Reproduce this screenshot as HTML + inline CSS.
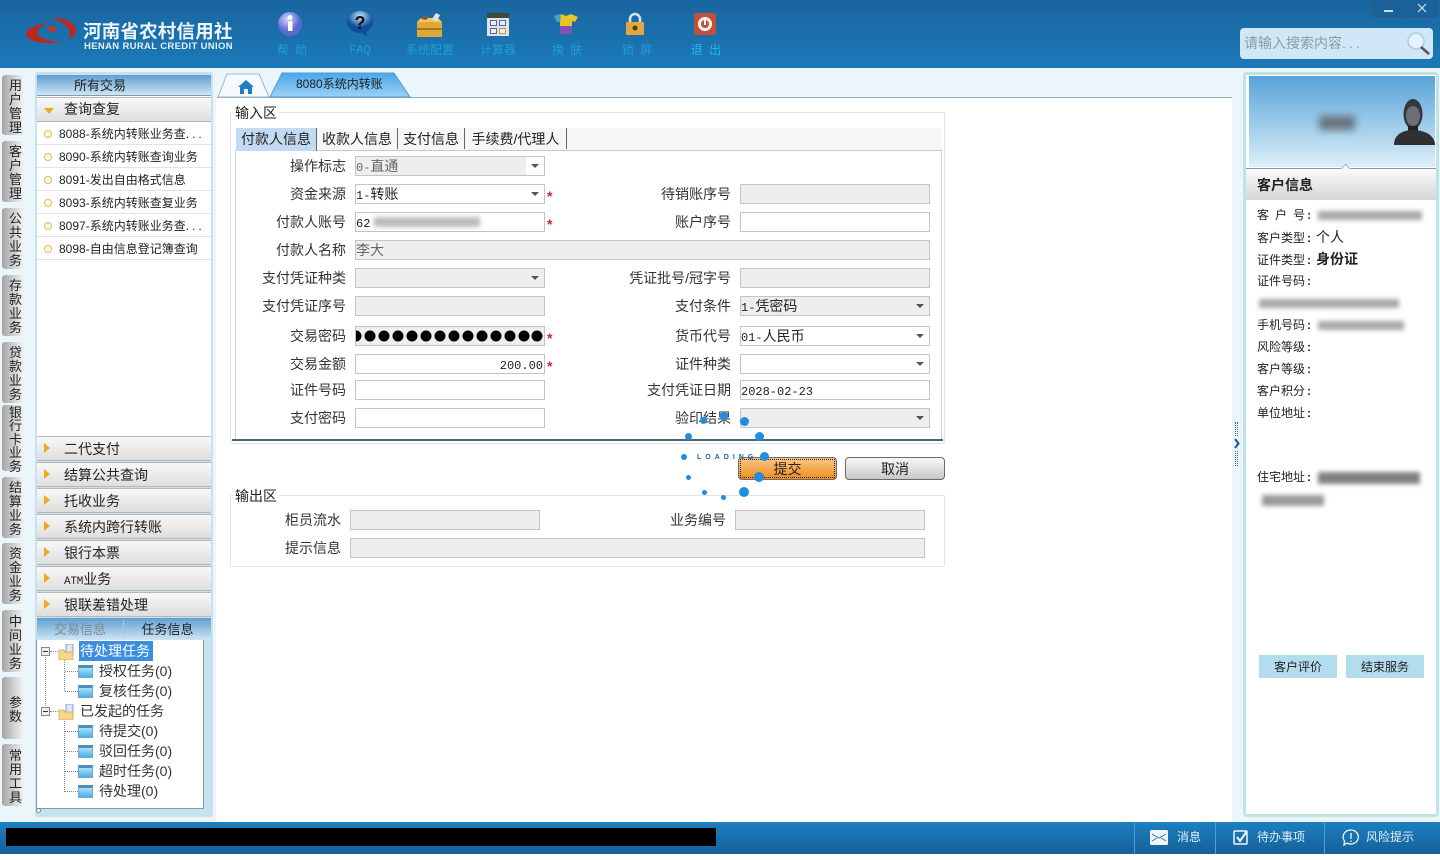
<!DOCTYPE html>
<html lang="zh"><head><meta charset="utf-8"><title>河南省农村信用社</title>
<style>
html,body{margin:0;padding:0;width:1440px;height:860px;overflow:hidden;background:#fff}
*{box-sizing:border-box}
body{position:relative;font-family:"Liberation Sans","WenQuanYi Zen Hei","Noto Sans CJK SC",sans-serif;font-size:14px;color:#222}
.a{position:absolute}
.hd{left:0;top:0;width:1440px;height:68px;background:linear-gradient(#1a659f,#1a7ab8)}
.mi{position:absolute;top:42px;height:16px;width:70px;text-align:center;color:#1d9fd4;font-size:12px;line-height:16px;word-spacing:3px}
.ic{position:absolute}
.vt{position:absolute;left:2px;width:22px;background:linear-gradient(90deg,#a4a4a4,#d2d2d2 55%,#f0f6f8);border-radius:3px 0 0 3px;text-align:center;font-size:13px;line-height:14px;color:#222;display:flex;align-items:center;justify-content:center;padding:3px 0 0 5px}
.acc{position:absolute;left:37px;width:174px;height:25px;background:linear-gradient(#f8f8f8,#dedede);border-top:1px solid #b4b8ba;border-bottom:1px solid #b4b8ba;font-size:14px;line-height:24px;padding-left:27px;color:#222}
.acc.r:before{content:"";position:absolute;left:7px;top:6px;border-left:6px solid #eea820;border-top:5px solid transparent;border-bottom:5px solid transparent}
.it{position:absolute;left:37px;width:174px;height:23px;border-bottom:1px solid #e3e3e3;font-size:12px;line-height:25px;padding-left:22px;color:#222;white-space:nowrap}
.it:before{content:"";position:absolute;left:7px;top:8px;width:6px;height:6px;border:1px solid #e8b84a;border-radius:50%;background:#fffbe8}
.dd{letter-spacing:3px}
.l{position:absolute;text-align:right;width:110px;height:20px;line-height:21px;font-size:14px;color:#333;white-space:nowrap}
.f{position:absolute;height:20px;border:1px solid #c4c4c4;background:#fff;font-size:14px;line-height:18px;padding-left:0;color:#222;white-space:nowrap;overflow:hidden}
.n{font-family:"Liberation Mono",monospace;font-size:12px}
.g{background:#eee;color:#666}
.f.s:after{content:"";position:absolute;right:5px;top:7px;border-top:4px solid #555;border-left:4px solid transparent;border-right:4px solid transparent}
.st{position:absolute;color:#c8282c;font-size:14px;font-weight:bold;line-height:20px}
.t2{position:absolute;top:128px;height:21px;line-height:22px;font-size:14px;text-align:center;color:#222;border-right:1px solid #666;white-space:nowrap}
.tr{position:absolute;font-size:14px;line-height:21px;height:20px;color:#333;white-space:nowrap}
.fo{position:absolute;width:15px;height:13px;background:linear-gradient(#a8e0fa,#4cb0e6);border:1px solid #6aa8cc;border-top:3px solid #4d8fb8}
.fy{position:absolute;width:16px;height:16px}
.dv{position:absolute;border-left:1px dotted #888}
.dh{position:absolute;border-top:1px dotted #888;height:0}
.mn{position:absolute;width:9px;height:9px;background:#eee;border:1px solid #888}
.mn:after{content:"";position:absolute;left:1px;top:3px;width:5px;height:1px;background:#333}
.ri{position:absolute;left:1257px;font-size:12px;line-height:16px;color:#222;white-space:nowrap}
.ri b{margin-left:2px;margin-right:5px}
.bl{position:absolute;background:#a8a8a8;filter:blur(2.5px)}
.dot{position:absolute;border-radius:50%;background:#1f8ee0}
.sb{position:absolute;top:822px;height:32px;color:#dfeffa;font-size:12px;line-height:31px}
</style></head><body>
<div class="a" style="left:0;top:68px;width:1440px;height:754px;background:#ebf6fb"></div>
<div class="a hd"></div>

<!-- logo -->
<svg class="ic" style="left:24px;top:16px" width="56" height="32" viewBox="0 0 56 32"><path d="M26 6C14 8 2 12 2 18c0 7 18 11 36 8-14-1-26-4-24-11 1-4 6-7 12-9z" fill="#b82a20"/><path d="M28 2c12-1 24 5 24 12 0 5-4 8-8 10 3-5 2-10-2-14-4-4-9-6-14-8z" fill="#b82a20"/><path d="M28 9l5 4-5 4-5-4z" fill="#c8342a"/></svg>
<div class="a" style="left:83px;top:19px;width:155px;height:24px;line-height:24px;font-family:'Noto Sans CJK SC',sans-serif;font-weight:700;font-size:18.5px;letter-spacing:.2px;color:#eef6fb;white-space:nowrap">河南省农村信用社</div>
<div class="a" style="left:84px;top:41px;width:155px;height:12px;line-height:12px;font-family:'Liberation Sans',sans-serif;font-weight:700;font-size:9.5px;letter-spacing:.34px;color:#e6f0f6;white-space:nowrap">HENAN RURAL CREDIT UNION</div>

<!-- toolbar icons -->
<svg class="ic" style="left:277px;top:11px" width="26" height="26" viewBox="0 0 26 26"><defs><radialGradient id="ig" cx=".4" cy=".3"><stop offset="0" stop-color="#d4d8fa"/><stop offset="1" stop-color="#5a68d0"/></radialGradient></defs><circle cx="13" cy="13" r="12" fill="url(#ig)"/><rect x="11" y="10" width="4.5" height="10" fill="#fff"/><circle cx="13" cy="6.5" r="2.4" fill="#fff"/></svg>
<svg class="ic" style="left:346px;top:10px" width="28" height="28" viewBox="0 0 28 28"><defs><radialGradient id="qg" cx=".5" cy=".25"><stop offset="0" stop-color="#bfe6fa"/><stop offset="1" stop-color="#0f4f9a"/></radialGradient></defs><ellipse cx="14" cy="12" rx="13" ry="11" fill="url(#qg)"/><path d="M15 22l6 5-1-7z" fill="#174a80"/><text x="14" y="19" font-family="Liberation Sans" font-weight="700" font-size="18" text-anchor="middle" fill="#111">?</text></svg>
<svg class="ic" style="left:415px;top:11px" width="28" height="27" viewBox="0 0 28 27"><rect x="2" y="11" width="25" height="15" fill="#e0a838"/><rect x="2" y="17" width="25" height="2" fill="#a87420"/><path d="M2 11l4-4h17l4 4z" fill="#f0c860"/><path d="M6 8l5-5 3 3-3 3z" fill="#7a5a40"/><path d="M17 8l4-6 4 2-3 6z" fill="#dde2e6"/></svg>
<svg class="ic" style="left:487px;top:13px" width="22" height="23" viewBox="0 0 22 23"><rect width="22" height="23" fill="#dfe3e6"/><rect width="22" height="5" fill="#3d4a3a"/><g fill="#e8eef4" stroke="#5868a0"><rect x="3.500" y="7.500" width="6" height="5"/><rect x="12.500" y="7.500" width="6" height="5"/><rect x="3.500" y="15.500" width="6" height="5"/><rect x="12.500" y="15.500" stroke="#c89a40" width="6" height="5"/></g></svg>
<svg class="ic" style="left:552px;top:12px" width="28" height="24" viewBox="0 0 28 24"><path d="M2 4l7-2 5 2 5-2 7 3-3 5-3-1v12a10 5 0 0 1-12 0V9L5 10z" fill="#e8c428"/><path d="M2 4l7-2-1 8-3 0z" fill="#45a0c8"/><path d="M8 14h12v7a8 3 0 0 1-12 0z" fill="#8a50b8"/></svg>
<svg class="ic" style="left:625px;top:12px" width="20" height="24" viewBox="0 0 20 24"><path d="M5 11V7a5 5 0 0 1 10 0v4" fill="none" stroke="#d8e4ea" stroke-width="2.500"/><rect x="1" y="10" width="18" height="13" rx="1" fill="#e0a840"/><circle cx="10" cy="16" r="2.500" fill="#5a3a10"/></svg>
<svg class="ic" style="left:694px;top:13px" width="22" height="22" viewBox="0 0 22 22"><rect width="22" height="22" rx="2" fill="#c0503a"/><circle cx="11" cy="11" r="6.500" fill="#f4e8e4" stroke="#fff"/><circle cx="11" cy="11" r="4" fill="#c0503a"/><rect x="10" y="6" width="2" height="6" fill="#fff"/></svg>
<div class="mi" style="left:257px">帮 助</div>
<div class="mi n" style="left:325px;font-size:12px">FAQ</div>
<div class="mi" style="left:395px">系统配置</div>
<div class="mi" style="left:463px">计算器</div>
<div class="mi" style="left:532px">换 肤</div>
<div class="mi" style="left:602px">锁 屏</div>
<div class="mi" style="left:671px;color:#25bbe8">退 出</div>

<!-- window controls -->
<div class="a" style="left:1371px;top:0;width:68px;height:18px;background:#1a6099;border:1px solid #2a5d8a;border-top:0;border-radius:0 0 6px 6px"></div>
<div class="a" style="left:1404px;top:0;width:1px;height:17px;background:#2a5d8a"></div>
<div class="a" style="left:1384px;top:10px;width:9px;height:2px;background:#c8dcea"></div>
<svg class="ic" style="left:1417px;top:3px" width="10" height="10" viewBox="0 0 10 10"><path d="M1 1l8 8M9 1L1 9" stroke="#d0e2ee" stroke-width="1.200"/></svg>

<!-- search -->
<div class="a" style="left:1240px;top:28px;width:193px;height:31px;background:#cfe7f6;border-radius:4px;color:#8a9aa4;font-size:14px;line-height:31px;padding-left:4px;white-space:nowrap">请输入搜索内容<span class="dd">...</span></div>
<svg class="ic" style="left:1405px;top:31px" width="26" height="25" viewBox="0 0 26 25"><circle cx="11" cy="10" r="8" fill="#e4f3fc" stroke="#a8cce4" stroke-width="1.500"/><path d="M16 16l8 7" stroke="#555" stroke-width="2.500"/></svg>

<!-- vertical tabs -->
<div class="vt" style="top:75px;height:60px">用<br>户<br>管<br>理</div>
<div class="vt" style="top:141px;height:61px">客<br>户<br>管<br>理</div>
<div class="vt" style="top:208px;height:61px">公<br>共<br>业<br>务</div>
<div class="vt" style="top:275px;height:61px">存<br>款<br>业<br>务</div>
<div class="vt" style="top:342px;height:61px">贷<br>款<br>业<br>务</div>
<div class="vt" style="top:405px;height:66px;line-height:13.5px">银<br>行<br>卡<br>业<br>务</div>
<div class="vt" style="top:477px;height:61px">结<br>算<br>业<br>务</div>
<div class="vt" style="top:543px;height:61px">资<br>金<br>业<br>务</div>
<div class="vt" style="top:610px;height:62px">中<br>间<br>业<br>务</div>
<div class="vt" style="top:677px;height:62px">参<br>数</div>
<div class="vt" style="top:744px;height:62px">常<br>用<br>工<br>具</div>

<!-- left panel -->
<div class="a" style="left:35px;top:72px;width:178px;height:745px;background:#c6e2ef;border-radius:3px"></div>
<div class="a" style="left:37px;top:75px;width:174px;height:361px;background:#fff"></div>
<div class="a" style="left:37px;top:75px;width:174px;height:21px;background:linear-gradient(#5f9fd2,#cfe5f3);border-bottom:1px solid #7a9db0;line-height:21px;font-size:13px;padding-left:37px;color:#222">所有交易</div>
<div class="acc" style="top:97px;height:25px;line-height:23px">查询查复</div>
<div class="a" style="left:44px;top:108px;width:0;height:0;border-top:6px solid #eea820;border-left:5px solid transparent;border-right:5px solid transparent"></div>
<div class="it" style="top:122px">8088-系统内转账业务查<span class="dd">...</span></div>
<div class="it" style="top:145px">8090-系统内转账查询业务</div>
<div class="it" style="top:168px">8091-发出自由格式信息</div>
<div class="it" style="top:191px">8093-系统内转账查复业务</div>
<div class="it" style="top:214px">8097-系统内转账业务查<span class="dd">...</span></div>
<div class="it" style="top:237px">8098-自由信息登记簿查询</div>
<div class="acc r" style="top:436px">二代支付</div>
<div class="acc r" style="top:462px">结算公共查询</div>
<div class="acc r" style="top:488px">托收业务</div>
<div class="acc r" style="top:514px">系统内跨行转账</div>
<div class="acc r" style="top:540px">银行本票</div>
<div class="acc r" style="top:566px"><span style="font-family:'Liberation Mono',monospace;font-size:11px;letter-spacing:-.2px">ATM</span>业务</div>
<div class="acc r" style="top:592px">银联差错处理</div>
<div class="a" style="left:37px;top:618px;width:174px;height:22px;background:linear-gradient(#5f9fd2,#cfe5f3)"></div>
<div class="a" style="left:123px;top:620px;width:1px;height:18px;background:#a9c8da"></div>
<div class="a" style="left:37px;top:620px;width:86px;height:20px;line-height:19px;text-align:center;color:#7a8c98;font-size:13px">交易信息</div>
<div class="a" style="left:124px;top:620px;width:87px;height:20px;line-height:19px;text-align:center;color:#222;font-size:13px">任务信息</div>
<div class="a" style="left:36px;top:640px;width:168px;height:169px;background:#fff;border:1px solid #8a9aa4;border-top:0"></div>
<div class="dv" style="left:45px;top:654px;height:58px"></div>
<div class="dv" style="left:64px;top:658px;height:33px"></div>
<div class="dv" style="left:64px;top:718px;height:74px"></div>
<div class="dh" style="left:50px;top:651px;width:8px"></div>
<div class="dh" style="left:50px;top:711px;width:8px"></div>
<div class="dh" style="left:65px;top:671px;width:13px"></div>
<div class="dh" style="left:65px;top:691px;width:13px"></div>
<div class="dh" style="left:65px;top:731px;width:13px"></div>
<div class="dh" style="left:65px;top:751px;width:13px"></div>
<div class="dh" style="left:65px;top:771px;width:13px"></div>
<div class="dh" style="left:65px;top:791px;width:13px"></div>
<div class="mn" style="left:41px;top:647px"></div>
<div class="mn" style="left:41px;top:707px"></div>
<svg class="fy" style="left:58px;top:644px" viewBox="0 0 16 16"><rect x="8" y="0" width="7" height="11" fill="#dfe6f8" stroke="#8a9ac8"/><path d="M1 6h5l1 2h8v8H1z" fill="#f4d888" stroke="#c8a850" stroke-width=".7"/></svg>
<svg class="fy" style="left:58px;top:704px" viewBox="0 0 16 16"><rect x="8" y="0" width="7" height="11" fill="#dfe6f8" stroke="#8a9ac8"/><path d="M1 6h5l1 2h8v8H1z" fill="#f4d888" stroke="#c8a850" stroke-width=".7"/></svg>
<div class="a" style="left:79px;top:641px;width:74px;height:20px;background:#3b8ee0"></div>
<div class="tr" style="left:80px;top:641px;color:#fff">待处理任务</div>
<div class="fo" style="left:78px;top:665px"></div><div class="tr" style="left:99px;top:661px">授权任务(0)</div>
<div class="fo" style="left:78px;top:685px"></div><div class="tr" style="left:99px;top:681px">复核任务(0)</div>
<div class="tr" style="left:80px;top:701px">已发起的任务</div>
<div class="fo" style="left:78px;top:725px"></div><div class="tr" style="left:99px;top:721px">待提交(0)</div>
<div class="fo" style="left:78px;top:745px"></div><div class="tr" style="left:99px;top:741px">驳回任务(0)</div>
<div class="fo" style="left:78px;top:765px"></div><div class="tr" style="left:99px;top:761px">超时任务(0)</div>
<div class="fo" style="left:78px;top:785px"></div><div class="tr" style="left:99px;top:781px">待处理(0)</div>
<div class="a" style="left:36px;top:808px;width:5px;height:5px;border:1px solid #888;border-radius:50%;background:#fff"></div>

<!-- main area -->
<div class="a" style="left:216px;top:98px;width:1016px;height:724px;background:#fff"></div>
<div class="a" style="left:217px;top:97px;width:1015px;height:1px;background:#8fb0c0"></div>
<svg class="ic" style="left:217px;top:72px" width="196" height="26" viewBox="0 0 196 26"><defs><linearGradient id="tb" x1="0" y1="0" x2="0" y2="1"><stop offset="0" stop-color="#4aa6ea"/><stop offset="1" stop-color="#9ad2f6"/></linearGradient></defs><path d="M1 25L10 2h32l10 23z" fill="#f4fafd" stroke="#9cb8c8"/><path d="M53 25L65 1h112l16 24z" fill="url(#tb)" stroke="#5a9ccc"/><path d="M21 15l8-7 8 7h-2v7h-4v-5h-4v5h-4v-7z" fill="#1c7fc0"/></svg>
<div class="a" style="left:296px;top:76px;font-size:12px;line-height:16px;color:#222;white-space:nowrap">8080系统内转账</div>

<!-- input fieldset -->
<div class="a" style="left:230px;top:112px;width:715px;height:332px;border:1px solid #e0e4e6;border-radius:2px"></div>
<div class="a" style="left:233px;top:105px;padding:0 2px;background:#fff;font-size:14px;line-height:16px;color:#222">输入区</div>
<div class="a" style="left:235px;top:150px;width:707px;height:291px;background:#fff;border:1px solid #c6d6df;border-top:1px solid #b8cdd9"></div>
<div class="a" style="left:232px;top:439px;width:711px;height:2px;background:#4a6478"></div>
<div class="a" style="left:236px;top:128px;width:706px;height:22px;background:#f6f6f6"></div>
<div class="a" style="left:236px;top:150px;width:706px;height:1px;background:#b8cdd9"></div>
<div class="t2" style="left:236px;width:81px;background:#c2dbf2;height:23px">付款人信息</div>
<div class="t2" style="left:317px;width:81px">收款人信息</div>
<div class="t2" style="left:398px;width:67px">支付信息</div>
<div class="t2" style="left:465px;width:102px">手续费/代理人</div>

<div class="l" style="left:236px;top:156px">操作标志</div>
<div class="f g s" style="left:355px;top:156px;width:190px"><span style="position:absolute;right:0;top:0;width:18px;height:18px;background:#fff"></span><span class="n">0-</span>直通</div>
<div class="l" style="left:236px;top:184px">资金来源</div>
<div class="f s" style="left:355px;top:184px;width:190px"><span class="n">1-</span>转账</div>
<div class="st" style="left:547px;top:186px">*</div>
<div class="l" style="left:621px;top:184px">待销账序号</div>
<div class="f g" style="left:740px;top:184px;width:190px"></div>
<div class="l" style="left:236px;top:212px">付款人账号</div>
<div class="f" style="left:355px;top:212px;width:190px"><span class="n">62</span></div>
<div class="bl" style="left:374px;top:217px;width:106px;height:10px;background:#bbb"></div>
<div class="st" style="left:547px;top:214px">*</div>
<div class="l" style="left:621px;top:212px">账户序号</div>
<div class="f" style="left:740px;top:212px;width:190px"></div>
<div class="l" style="left:236px;top:240px">付款人名称</div>
<div class="f g" style="left:355px;top:240px;width:575px">李大</div>
<div class="l" style="left:236px;top:268px">支付凭证种类</div>
<div class="f g s" style="left:355px;top:268px;width:190px"></div>
<div class="l" style="left:621px;top:268px">凭证批号/冠字号</div>
<div class="f g" style="left:740px;top:268px;width:190px"></div>
<div class="l" style="left:236px;top:296px">支付凭证序号</div>
<div class="f g" style="left:355px;top:296px;width:190px"></div>
<div class="l" style="left:621px;top:296px">支付条件</div>
<div class="f g s" style="left:740px;top:296px;width:190px;color:#222"><span class="n">1-</span>凭密码</div>
<div class="l" style="left:236px;top:326px">交易密码</div>
<div class="f g" style="left:355px;top:326px;width:190px"></div>
<svg class="ic" style="left:356px;top:328px" width="188" height="16" viewBox="0 0 188 16"><g fill="#000"><circle cx="0" cy="8" r="5.500"/><circle cx="14" cy="8" r="5.500"/><circle cx="28" cy="8" r="5.500"/><circle cx="42" cy="8" r="5.500"/><circle cx="56" cy="8" r="5.500"/><circle cx="70" cy="8" r="5.500"/><circle cx="84" cy="8" r="5.500"/><circle cx="98" cy="8" r="5.500"/><circle cx="112" cy="8" r="5.500"/><circle cx="126" cy="8" r="5.500"/><circle cx="140" cy="8" r="5.500"/><circle cx="154" cy="8" r="5.500"/><circle cx="168" cy="8" r="5.500"/><circle cx="181" cy="8" r="5.500"/></g></svg>
<div class="st" style="left:547px;top:328px">*</div>
<div class="l" style="left:621px;top:326px">货币代号</div>
<div class="f s" style="left:740px;top:326px;width:190px"><span class="n">01-</span>人民币</div>
<div class="l" style="left:236px;top:354px">交易金额</div>
<div class="f" style="left:355px;top:354px;width:190px;text-align:right;padding-right:1px"><span class="n">200.00</span></div>
<div class="st" style="left:547px;top:356px">*</div>
<div class="l" style="left:621px;top:354px">证件种类</div>
<div class="f s" style="left:740px;top:354px;width:190px"></div>
<div class="l" style="left:236px;top:380px">证件号码</div>
<div class="f" style="left:355px;top:380px;width:190px"></div>
<div class="l" style="left:621px;top:380px">支付凭证日期</div>
<div class="f" style="left:740px;top:380px;width:190px"><span class="n">2028-02-23</span></div>
<div class="l" style="left:236px;top:408px">支付密码</div>
<div class="f" style="left:355px;top:408px;width:190px"></div>
<div class="l" style="left:621px;top:408px">验印结果</div>
<div class="f g s" style="left:740px;top:408px;width:190px"></div>

<!-- buttons -->
<div class="a" style="left:738px;top:457px;width:99px;height:23px;background:linear-gradient(#f9c888,#f08c1e);border:1px solid #6a6a6a;border-radius:4px;text-align:center;line-height:23px;color:#222;font-size:14px"><span style="position:absolute;inset:1px;border:1px dotted #222"></span>提交</div>
<div class="a" style="left:845px;top:457px;width:100px;height:23px;background:linear-gradient(#f8f8f8,#c8c8c8);border:1px solid #6a6a6a;border-radius:4px;text-align:center;line-height:23px;color:#222;font-size:14px">取消</div>

<!-- output fieldset -->
<div class="a" style="left:230px;top:495px;width:715px;height:72px;border:1px solid #e0e4e6;border-radius:2px"></div>
<div class="a" style="left:233px;top:488px;padding:0 2px;background:#fff;font-size:14px;line-height:16px;color:#222">输出区</div>
<div class="l" style="left:231px;top:510px">柜员流水</div>
<div class="f g" style="left:350px;top:510px;width:190px"></div>
<div class="l" style="left:616px;top:510px">业务编号</div>
<div class="f g" style="left:735px;top:510px;width:190px"></div>
<div class="l" style="left:231px;top:538px">提示信息</div>
<div class="f g" style="left:350px;top:538px;width:575px"></div>

<!-- loading spinner -->
<div class="dot" style="left:685px;top:433px;width:7px;height:7px"></div>
<div class="dot" style="left:700px;top:417px;width:7px;height:7px"></div>
<div class="dot" style="left:720px;top:412px;width:8px;height:8px"></div>
<div class="dot" style="left:740px;top:417px;width:9px;height:9px"></div>
<div class="dot" style="left:755px;top:432px;width:9px;height:9px"></div>
<div class="dot" style="left:760px;top:452px;width:9px;height:9px"></div>
<div class="dot" style="left:754px;top:472px;width:10px;height:10px"></div>
<div class="dot" style="left:739px;top:487px;width:10px;height:10px"></div>
<div class="dot" style="left:721px;top:495px;width:5px;height:5px"></div>
<div class="dot" style="left:702px;top:490px;width:5px;height:5px"></div>
<div class="dot" style="left:686px;top:475px;width:5px;height:5px"></div>
<div class="dot" style="left:681px;top:454px;width:6px;height:6px"></div>
<div class="a" style="left:697px;top:454px;font-family:'Liberation Sans',sans-serif;font-weight:700;font-size:7px;line-height:8px;letter-spacing:4px;color:#1d6a92;white-space:nowrap">LOADING</div>

<!-- right panel -->
<div class="a" style="left:1243px;top:72px;width:196px;height:745px;background:#fff;border:3px solid #bfe4e6;border-radius:4px"></div>
<div class="a" style="left:1249px;top:76px;width:186px;height:91px;background:linear-gradient(#57a3d8,#dceff9)"></div>
<div class="a" style="left:1319px;top:116px;width:36px;height:14px;background:#555;filter:blur(4px);opacity:.75"></div>
<svg class="ic" style="left:1393px;top:98px" width="42" height="48" viewBox="0 0 42 48"><ellipse cx="20" cy="16" rx="9.500" ry="15" fill="#34383c"/><ellipse cx="20" cy="18" rx="7" ry="10" fill="#6c7074"/><path d="M15 28h10v5H15z" fill="#222"/><path d="M1 47c0-10 8-15 19-15s22 5 22 15z" fill="#2e3033"/></svg>
<div class="a" style="left:1246px;top:168px;width:190px;height:1px;background:#8a9aa4"></div>
<div class="a" style="left:1246px;top:169px;width:190px;height:31px;background:linear-gradient(#fafafa,#d6d6d6);font-size:14px;line-height:33px;padding-left:11px;font-weight:bold;color:#222">客户信息</div>
<div class="a" style="left:1342px;top:165px;width:7px;height:7px;background:#f4f8fa;transform:rotate(45deg);border:1px solid #aab8c0;border-right:0;border-bottom:0"></div>

<div class="ri" style="top:207px;word-spacing:2.700px">客 户 号<b>:</b></div><div class="bl" style="left:1318px;top:211px;width:104px;height:9px"></div>
<div class="ri" style="top:229px">客户类型<b>:</b><span style="font-size:14px">个人</span></div>
<div class="ri" style="top:251px">证件类型<b>:</b><span style="font-size:14px;font-weight:bold">身份证</span></div>
<div class="ri" style="top:273px">证件号码<b>:</b></div>
<div class="bl" style="left:1259px;top:299px;width:140px;height:9px"></div>
<div class="ri" style="top:317px">手机号码<b>:</b></div><div class="bl" style="left:1318px;top:321px;width:86px;height:9px"></div>
<div class="ri" style="top:339px">风险等级<b>:</b></div>
<div class="ri" style="top:361px">客户等级<b>:</b></div>
<div class="ri" style="top:383px">客户积分<b>:</b></div>
<div class="ri" style="top:405px">单位地址<b>:</b></div>
<div class="ri" style="top:469px">住宅地址<b>:</b></div>
<div class="bl" style="left:1318px;top:472px;width:102px;height:12px;background:#808080"></div>
<div class="bl" style="left:1262px;top:495px;width:62px;height:11px;background:#999"></div>
<div class="a" style="left:1259px;top:655px;width:78px;height:23px;background:#b4dcef;text-align:center;line-height:24px;font-size:12px;color:#222">客户评价</div>
<div class="a" style="left:1346px;top:655px;width:78px;height:23px;background:#b4dcef;text-align:center;line-height:24px;font-size:12px;color:#222">结束服务</div>
<!-- collapse handle -->
<div class="a" style="left:1235px;top:422px;width:3px;height:14px;border-left:1px dotted #4a6a8a;border-right:1px dotted #4a6a8a"></div>
<div class="a" style="left:1235px;top:451px;width:3px;height:15px;border-left:1px dotted #4a6a8a;border-right:1px dotted #4a6a8a"></div>
<svg class="ic" style="left:1234px;top:438px" width="6" height="11" viewBox="0 0 6 11"><path d="M1 1l3.500 4.500L1 10" fill="none" stroke="#1f4f8a" stroke-width="2"/></svg>

<!-- status bar -->
<div class="a" style="left:0;top:822px;width:1440px;height:32px;background:linear-gradient(#1c80bf,#155f9a)"></div>
<div class="a" style="left:6px;top:828px;width:710px;height:18px;background:#000"></div>
<div class="a" style="left:1134px;top:822px;width:1px;height:32px;background:#4d9ed0"></div>
<div class="a" style="left:1215px;top:822px;width:1px;height:32px;background:#4d9ed0"></div>
<div class="a" style="left:1324px;top:822px;width:1px;height:32px;background:#4d9ed0"></div>
<svg class="ic" style="left:1150px;top:830px" width="18" height="15" viewBox="0 0 18 15"><rect width="18" height="15" rx="1.500" fill="#eef6fb"/><path d="M2 4l7 4 7-4M2 11l5-3M16 11l-5-3" fill="none" stroke="#3a7aa8"/></svg>
<div class="sb" style="left:1177px">消息</div>
<svg class="ic" style="left:1233px;top:829px" width="16" height="17" viewBox="0 0 16 17"><rect x="1" y="2" width="13" height="13" rx="1" fill="none" stroke="#eef6fb" stroke-width="1.500"/><path d="M4 8l3 4 7-10" fill="none" stroke="#eef6fb" stroke-width="2"/></svg>
<div class="sb" style="left:1257px">待办事项</div>
<svg class="ic" style="left:1342px;top:829px" width="18" height="17" viewBox="0 0 18 17"><path d="M9 1a7.500 7 0 1 1-4 13l-3 2 .5-4A7.500 7 0 0 1 9 1z" fill="none" stroke="#eef6fb" stroke-width="1.300"/><path d="M9 4v6M9 11.500v1.500" stroke="#eef6fb" stroke-width="1.300"/></svg>
<div class="sb" style="left:1366px">风险提示</div>
</body></html>
